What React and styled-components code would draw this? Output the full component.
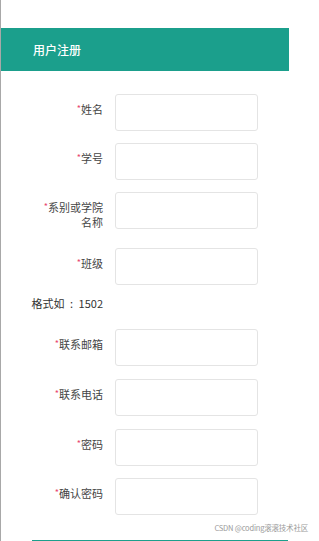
import React from 'react';
import styled, {createGlobalStyle} from 'styled-components';

const GlobalStyle = createGlobalStyle`
    html, body {
        margin: 0;
        padding: 0;
        background: #ffffff;
    }
    body {
        font-family: "Noto Sans CJK SC", "Noto Sans", sans-serif;
    }
`;

const Page = styled.div`
    position: relative;
    width: 319px;
    height: 541px;
    box-sizing: border-box;
    border-left: 1px solid #a8a8a8;
    padding-top: 28px;
    overflow: hidden;
`;

const Header = styled.div`
    display: flex;
    align-items: center;
    width: 288px;
    height: 43px;
    box-sizing: border-box;
    padding-left: 32px;
    background-color: #1b9f8c;
    color: #ffffff;
    font-size: 12px;
    font-weight: 500;
`;

const Form = styled.div`
    display: flex;
    flex-direction: column;
    padding-top: 23px;
`;

const Row = styled.div`
    display: flex;
    align-items: flex-start;
    gap: 12px;
    margin-bottom: ${props => props.gap ?? 12}px;
`;

const Label = styled.div`
    width: 102px;
    box-sizing: border-box;
    padding-top: 7px;
    text-align: right;
    font-size: 11px;
    line-height: 15px;
    color: #444444;
`;

const Star = styled.span`
    color: #e8466e;
    font-size: 9px;
    vertical-align: 2px;
`;

const Input = styled.div`
    width: 143px;
    height: 37px;
    box-sizing: border-box;
    border: 1px solid #e4e4e4;
    border-radius: 3px;
    background: #ffffff;
`;

const Hint = styled.div`
    width: 102px;
    text-align: right;
    font-size: 11px;
    line-height: 15px;
    color: #333333;
    margin-top: 11px;
    margin-bottom: 18px;
    word-spacing: 3px;
`;

const Footer = styled.div`
    display: flex;
    flex-direction: column;
    align-items: flex-end;
    padding-top: 8px;
`;

const Watermark = styled.div`
    font-size: 7.5px;
    line-height: 10px;
    color: #9a9a9a;
    margin-right: 11px;
    letter-spacing: -0.2px;
`;

const BottomLine = styled.div`
    align-self: flex-start;
    margin-left: 31px;
    margin-top: 7px;
    width: 256px;
    height: 2px;
    background-color: #1b9f8c;
`;

const fields = [
    {label: ['姓名'], gap: 12},
    {label: ['学号'], gap: 12},
    {label: ['系别或学院', '名称'], gap: 18},
    {label: ['班级'], gap: 0},
];

const fields2 = [
    {label: ['联系邮箱'], gap: 13},
    {label: ['联系电话'], gap: 13},
    {label: ['密码'], gap: 12},
    {label: ['确认密码'], gap: 0},
];

const Field = ({label, gap}) => (
    <Row gap={gap}>
        <Label>
            <Star>*</Star>{label[0]}
            {label[1] && <><br/>{label[1]}</>}
        </Label>
        <Input/>
    </Row>
);

export default function App() {
    return (
        <>
            <GlobalStyle/>
            <Page>
                <Header>用户注册</Header>
                <Form>
                    {fields.map(f => <Field key={f.label[0]} {...f}/>)}
                    <Hint>格式如 : 1502</Hint>
                    {fields2.map(f => <Field key={f.label[0]} {...f}/>)}
                    <Footer>
                        <Watermark>CSDN @coding滚滚技术社区</Watermark>
                        <BottomLine/>
                    </Footer>
                </Form>
            </Page>
        </>
    );
}
